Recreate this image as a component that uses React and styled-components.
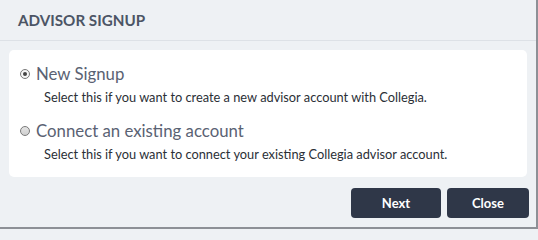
import React, { useState } from 'react';
import styled, { createGlobalStyle } from 'styled-components';

const Global = createGlobalStyle`
    html, body { margin: 0; padding: 0; background: #eef1f4; }
    * { box-sizing: border-box; }
`

const Modal = styled.div`
    width: 538px;
    height: 229px;
    display: flex;
    flex-direction: column;
    background: #eef1f4;
    border-right: 2px solid #8d9096;
    border-bottom: 2px solid #8d9096;
    font-family: Lato, "Noto Sans", sans-serif;
`

const Header = styled.div`
    height: 41px;
    flex-shrink: 0;
    padding: 0 18px;
    display: flex;
    align-items: center;
    border-bottom: 1px solid #dde1e6;
    color: #4c5565;
    font-size: 15.2px;
    font-weight: 700;
`

const Body = styled.div`
    padding: 9px 9px 0 9px;
`

const Card = styled.div`
    background: #fff;
    border-radius: 5px;
    padding: 14px 11px 15px 11px;
    display: flex;
    flex-direction: column;
    gap: 16px;
`

const Option = styled.label`
    display: flex;
    flex-direction: column;
    cursor: pointer;
`

const OptionTitle = styled.div`
    display: flex;
    align-items: center;
    gap: 6px;
    height: 20px;
    color: #5a6273;
    font-size: 16.8px;
    line-height: 20px;
`

const Radio = styled.span`
    width: 10px;
    height: 10px;
    flex-shrink: 0;
    border-radius: 50%;
    border: 1px solid #7a7a7a;
    background: ${({checked}) => checked ? '#f6f6f6' : 'linear-gradient(#e4e4e4, #cfcfcf)'};
    display: flex;
    align-items: center;
    justify-content: center;
    &:after {
        content: "";
        width: 4px;
        height: 4px;
        border-radius: 50%;
        background: ${({checked}) => checked ? '#444' : 'transparent'};
    }
`

const Description = styled.div`
    padding-left: 24px;
    margin-top: 5px;
    color: #2b2f36;
    font-size: 12.8px;
    line-height: 16px;
`

const Footer = styled.div`
    display: flex;
    justify-content: flex-end;
    gap: 6px;
    padding: 11px 7px 0 0;
`

const Button = styled.button`
    width: ${({w}) => w}px;
    height: 30px;
    border: none;
    border-radius: 4px;
    background: #2f3748;
    color: #fff;
    font-family: inherit;
    font-size: 13px;
    font-weight: 700;
    cursor: pointer;
`

const options = [
    {id: 'new', title: 'New Signup', text: 'Select this if you want to create a new advisor account with Collegia.'},
    {id: 'existing', title: 'Connect an existing account', text: 'Select this if you want to connect your existing Collegia advisor account.'},
]

const App = () => {
    const [choice, setChoice] = useState('new');
    return <>
        <Global/>
        <Modal>
            <Header>ADVISOR SIGNUP</Header>
            <Body>
                <Card>
                    {options.map(o =>
                        <Option key={o.id} onClick={() => setChoice(o.id)}>
                            <OptionTitle><Radio checked={choice === o.id}/>{o.title}</OptionTitle>
                            <Description>{o.text}</Description>
                        </Option>
                    )}
                </Card>
            </Body>
            <Footer>
                <Button w={90}>Next</Button>
                <Button w={82}>Close</Button>
            </Footer>
        </Modal>
    </>
}

export default App;
